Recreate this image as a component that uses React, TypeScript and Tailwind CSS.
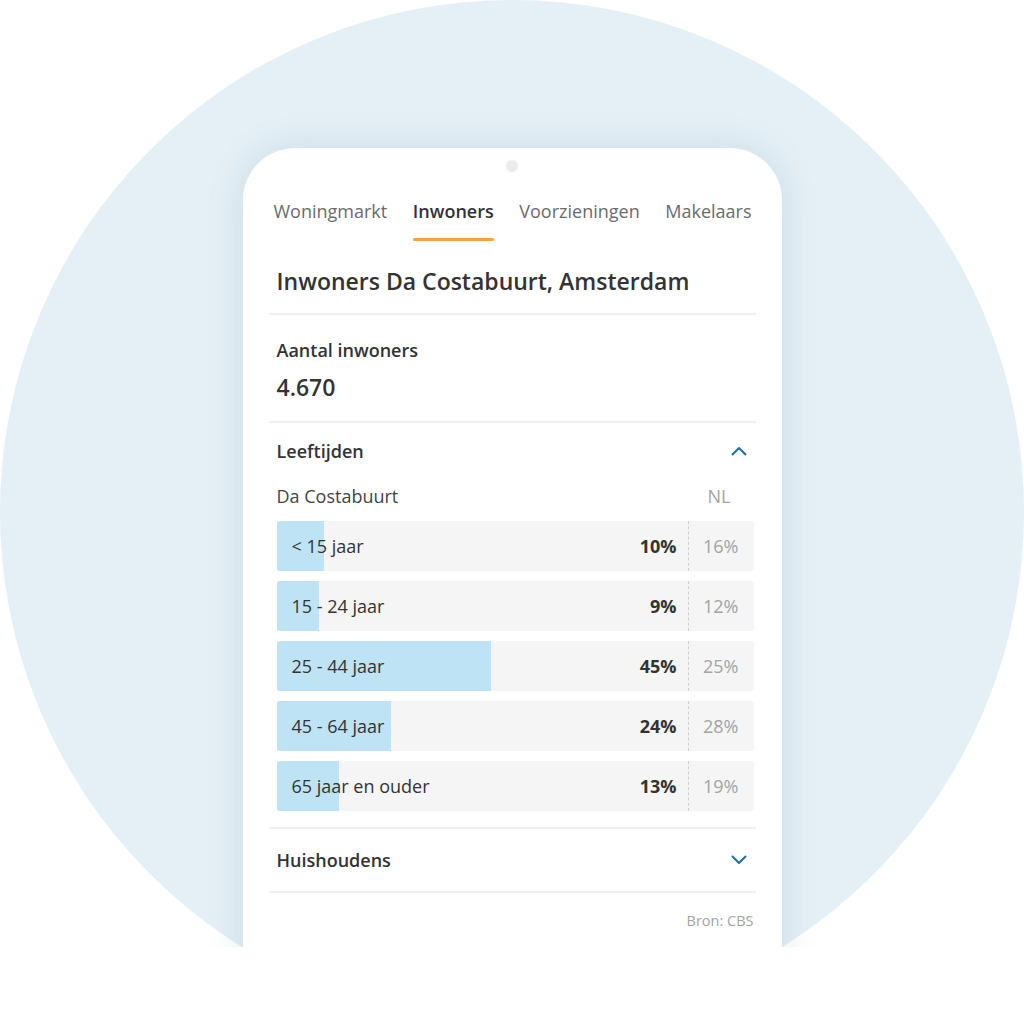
import { useState } from "react";

const font = { fontFamily: '"Open Sans", "Liberation Sans", sans-serif' };

const tabs = ["Woningmarkt", "Inwoners", "Voorzieningen", "Makelaars"];

const ages = [
  { label: "< 15 jaar", pct: 10, nl: 16 },
  { label: "15 - 24 jaar", pct: 9, nl: 12 },
  { label: "25 - 44 jaar", pct: 45, nl: 25 },
  { label: "45 - 64 jaar", pct: 24, nl: 28 },
  { label: "65 jaar en ouder", pct: 13, nl: 19 },
];

function Chevron({ up }: { up?: boolean }) {
  return (
    <svg width="16" height="10" viewBox="0 0 16 10" fill="none">
      <path
        d={up ? "M1.5 8.5L8 2l6.5 6.5" : "M1.5 1.5L8 8l6.5-6.5"}
        stroke="#1b6fa4"
        strokeWidth="2"
        strokeLinecap="round"
        strokeLinejoin="round"
      />
    </svg>
  );
}

export default function App() {
  const [active, setActive] = useState("Inwoners");
  const [open, setOpen] = useState(true);

  return (
    <div className="w-[1024px] h-[1024px] bg-white" style={font}>
      <div className="relative w-[1024px] h-[947px] overflow-hidden">
        <div className="absolute left-0 top-0 w-[1024px] h-[1024px] rounded-full bg-[#e5f0f6]" />

        <div className="relative mx-auto mt-[148px] w-[539px] h-[900px] rounded-t-[52px] bg-white shadow-[0_0_36px_rgba(60,110,140,0.16)]">
          <div className="pt-[12px] flex justify-center">
            <div className="w-3 h-3 rounded-full bg-[#ececec]" />
          </div>

          {/* tabs */}
          <div className="mt-[27px] flex justify-between pl-[31px] pr-[30px]">
            {tabs.map((t) => (
              <button
                key={t}
                onClick={() => setActive(t)}
                className="flex flex-col items-stretch"
              >
                <span
                  className={`h-6 leading-6 text-[18px] ${
                    active === t ? "font-semibold text-[#333]" : "text-[#6b6b6b]"
                  }`}
                >
                  {t}
                </span>
                <span
                  className={`mt-[15px] h-[3px] rounded-full ${
                    active === t ? "bg-[#f5a33b]" : "bg-transparent"
                  }`}
                />
              </button>
            ))}
          </div>

          <div className="mx-[26px]">
            <h1 className="mt-[25px] px-2 h-[30px] leading-[30px] text-[23px] font-semibold text-[#333]">
              Inwoners Da Costabuurt, Amsterdam
            </h1>
            <div className="mt-[17px] h-[2px] bg-[#f0f0f0]" />

            <div className="px-2">
              <div className="mt-[23px] h-6 leading-6 text-[18px] font-semibold text-[#333]">
                Aantal inwoners
              </div>
              <div className="mt-[10px] h-[30px] leading-[30px] text-[23px] font-semibold text-[#333]">
                4.670
              </div>
            </div>
            <div className="mt-[19px] h-[2px] bg-[#f0f0f0]" />

            <button
              onClick={() => setOpen(!open)}
              className="mt-[16px] w-full flex items-center justify-between pl-2 pr-[9px] h-6"
            >
              <span className="text-[18px] font-semibold text-[#333] leading-6">Leeftijden</span>
              <Chevron up={open} />
            </button>

            <div className="mt-[21px] flex justify-between pl-2 pr-[25px] h-6 leading-6 text-[18px]">
              <span className="text-[#444]">Da Costabuurt</span>
              <span className="text-[#a3a3a3]">NL</span>
            </div>

            <div className="mt-[13px] ml-2 mr-[2px] flex flex-col gap-[10px]">
              {ages.map((a) => (
                <div
                  key={a.label}
                  className="relative h-[50px] rounded-[3px] bg-[#f5f5f5] overflow-hidden flex items-center text-[18px]"
                >
                  <div
                    className="absolute left-0 top-0 bottom-0 bg-[#bee3f5]"
                    style={{ width: `${a.pct}%` }}
                  />
                  <span className="relative flex-1 pl-[15px] text-[#333]">{a.label}</span>
                  <span className="relative pr-[11px] font-bold text-[#333]">{a.pct}%</span>
                  <span className="relative self-stretch w-[66px] border-l border-dashed border-[#cfcfcf] flex items-center justify-end pr-[15px] text-[#a3a3a3]">
                    {a.nl}%
                  </span>
                </div>
              ))}
            </div>

            <div className="mt-[16px] h-[2px] bg-[#f0f0f0]" />
            <div className="mt-[19px] flex items-center justify-between pl-2 pr-[9px] h-6">
              <span className="text-[18px] font-semibold text-[#333] leading-6">Huishoudens</span>
              <Chevron />
            </div>
            <div className="mt-[19px] h-[2px] bg-[#f0f0f0]" />

            <div className="mt-[18px] h-5 leading-5 pr-[2px] text-right text-[14.5px] text-[#a3a3a3]">
              Bron: CBS
            </div>
          </div>
        </div>
      </div>
    </div>
  );
}
